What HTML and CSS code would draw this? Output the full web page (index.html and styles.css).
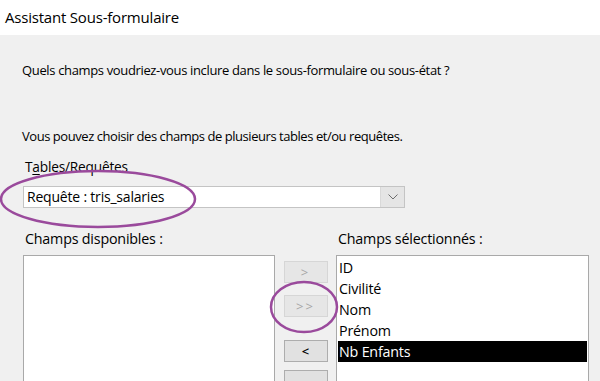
FILE: index.html
```html
<!DOCTYPE html>
<html lang="fr">
<head>
<meta charset="utf-8">
<title>Assistant Sous-formulaire</title>
<link rel="stylesheet" href="styles.css">
</head>
<body>
<div class="window">
  <div class="titlebar">Assistant Sous-formulaire</div>
  <div class="content">
    <p class="question">Quels champs voudriez-vous inclure dans le sous-formulaire ou sous-état ?</p>
    <p class="hint">Vous pouvez choisir des champs de plusieurs tables et/ou requêtes.</p>
    <div class="label">T<span class="u">a</span>bles/Requêtes</div>
    <div class="combo">
      <span class="combo-value">Requête : tris_salaries</span>
      <span class="combo-btn"><svg width="10" height="6" viewBox="0 0 10 6"><path d="M0.5 0.5 L5 5 L9.5 0.5" fill="none" stroke="#6d6d6d" stroke-width="1"/></svg></span>
    </div>
    <div class="fields">
      <div class="col-label">Champs disponibles :</div>
      <div></div>
      <div class="col-label">Champs sélectionnés :</div>
      <div class="listbox"></div>
      <div class="buttons">
        <button class="btn disabled b1">&gt;</button>
        <button class="btn disabled b2">&gt;&gt;</button>
        <button class="btn b3">&lt;</button>
        <button class="btn b4">&lt;&lt;</button>
      </div>
      <div class="listbox">
        <div class="item">ID</div>
        <div class="item">Civilité</div>
        <div class="item">Nom</div>
        <div class="item">Prénom</div>
        <div class="item selected">Nb Enfants</div>
      </div>
    </div>
  </div>
  <svg class="marks" width="600" height="381" viewBox="0 0 600 381">
    <ellipse cx="98" cy="199" rx="97" ry="28" fill="none" stroke="#9a4a9c" stroke-width="2.5"/>
    <ellipse cx="304" cy="307" rx="33" ry="25" fill="none" stroke="#9a4a9c" stroke-width="2.5"/>
  </svg>
</div>
</body>
</html>
```

FILE: styles.css
```css
* { box-sizing: border-box; }
html, body { margin: 0; padding: 0; }
body {
  width: 600px;
  height: 381px;
  overflow: hidden;
  background: #f0f0f0;
  font-family: "Open Sans", "Noto Sans", sans-serif;
  color: #000;
}
.window {
  position: relative;
  width: 600px;
  height: 381px;
  overflow: hidden;
}
.titlebar {
  height: 35px;
  background: #fff;
  font-size: 15px;
  line-height: 35px;
  padding-left: 5px;
  letter-spacing: -0.2px;
}
.content {
  padding: 0 0 0 22px;
  font-size: 13.5px;
  letter-spacing: -0.2px;
}
.question, .hint {
  font-size: 13px;
  letter-spacing: -0.35px;
}
.hint { letter-spacing: -0.45px; }
.question {
  margin: 0;
  padding-top: 25px;
  line-height: 20px;
}
.hint {
  margin: 0;
  padding-top: 46px;
  line-height: 20px;
}
.label {
  margin-top: 11px;
  padding-left: 3px;
  line-height: 20px;
  font-size: 13.7px;
}
.label .u { text-decoration: underline; text-underline-offset: 2px; }
.combo {
  margin-top: 9px;
  margin-left: 1px;
  width: 382px;
  height: 22px;
  background: #fff;
  border: 1px solid #c4c4c4;
  display: flex;
  align-items: center;
  justify-content: space-between;
}
.combo-value {
  padding-left: 3px;
  font-size: 14px;
  line-height: 20px;
}
.combo-btn {
  width: 24px;
  height: 20px;
  background: #e5e5e5;
  border-left: 1px solid #d9d9d9;
  display: flex;
  align-items: center;
  justify-content: center;
}
.fields {
  margin-top: 22px;
  margin-left: 1px;
  display: grid;
  grid-template-columns: 252px 44px 253px;
  column-gap: 8.5px;
  row-gap: 7px;
  grid-template-rows: 18px 150px;
}
.col-label {
  padding-left: 2px;
  line-height: 18px;
  font-size: 14.3px;
}
.listbox {
  background: #fff;
  border: 1px solid #a9a9a9;
  padding: 1px 1px 0;
  font-size: 14.3px;
}
.item {
  height: 21px;
  line-height: 21px;
  padding-left: 1px;
}
.item.selected {
  background: #000;
  color: #fff;
}
.buttons {
  display: flex;
  flex-direction: column;
  padding-top: 6px;
}
.btn {
  width: 44px;
  height: 22px;
  margin: 0;
  padding: 0;
  background: #e1e1e1;
  border: 1px solid #adadad;
  font-family: "Open Sans", sans-serif;
  font-size: 13px;
  color: #000;
  font-weight: 600;
}
.btn.disabled {
  background: #e6e6e6;
  border-color: #d6d6d6;
  color: #a6a6a6;
  font-weight: 400;
  letter-spacing: 2px;
}
.b2 { margin-top: 12px; }
.b3 { margin-top: 23px; }
.b4 { margin-top: 8px; padding-top: 4px; }
.marks {
  position: absolute;
  left: 0;
  top: 0;
  pointer-events: none;
}
```
